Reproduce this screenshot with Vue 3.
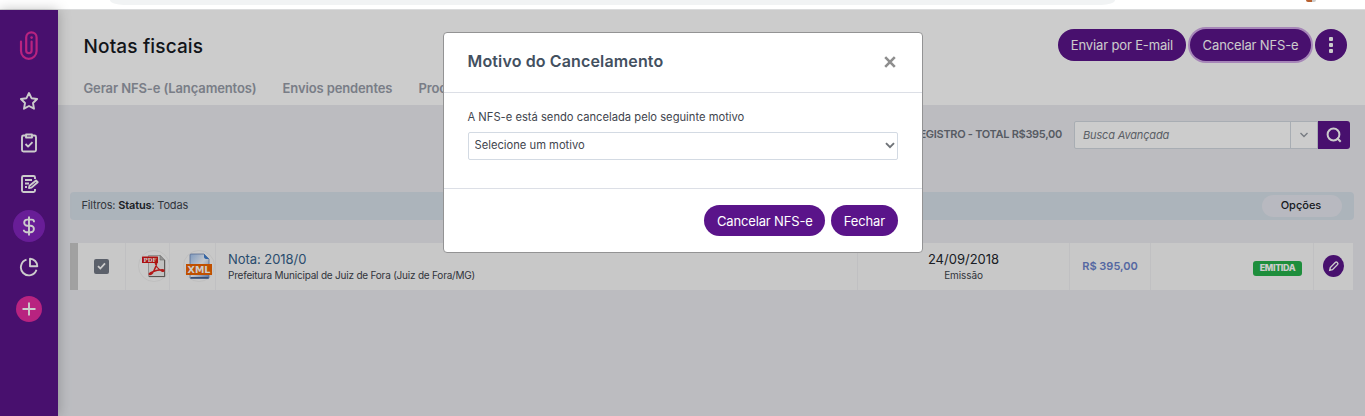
<script setup>
import { ref } from "vue";

const tabs = ["Gerar NFS-e (Lançamentos)", "Envios pendentes", "Processados"];
const motivo = ref("");
const busca = ref("");
const modalOpen = ref(true);
</script>

<template>
  <div class="window">
    <div class="browser-bar">
      <div class="address"></div>
      <div class="avatar"></div>
    </div>

    <div class="app">
      <nav class="sidebar">
        <svg class="logo" width="20" height="32" viewBox="0 0 20 32">
          <path d="M2 11.500V21a7.800 7.800 0 0 0 15.600 0V7.500a5.200 5.200 0 0 0-10.400 0V20.500a2.700 2.700 0 0 0 5.400 0V11.500" />
          <circle cx="12.600" cy="7.600" r="1.300" />
        </svg>
        <a class="item star">
          <svg width="20" height="20" viewBox="0 0 20 20"><path d="M10 2l2.500 5.200 5.600.8-4.100 4 1 5.700-5-2.700-5 2.700 1-5.700-4.100-4 5.600-.8z" /></svg>
        </a>
        <a class="item clip">
          <svg width="20" height="20" viewBox="0 0 20 20"><path d="M6 2.500H4.500a1.500 1.500 0 0 0-1.500 1.500v13a1.500 1.500 0 0 0 1.500 1.500h11a1.500 1.500 0 0 0 1.500-1.500V4a1.500 1.500 0 0 0-1.500-1.500H14M7 1.500h6v3H7zM6.500 11l2.600 2.600 4.400-4.400" /></svg>
        </a>
        <a class="item note">
          <svg width="20" height="20" viewBox="0 0 20 20"><path d="M16 5V3.500A1.500 1.500 0 0 0 14.500 2h-10A1.500 1.500 0 0 0 3 3.500v13A1.500 1.500 0 0 0 4.500 18h10a1.500 1.500 0 0 0 1.500-1.500V15M6 6h7M6 9.500h4M6 13h2M10 14l.5-2.300 6.500-5.200 1.700 1.700-6.200 5.400z" /></svg>
        </a>
        <a class="item money">
          <svg width="20" height="20" viewBox="0 0 20 20"><path d="M10 .5v19M15 6.200V5.800a2.200 2.200 0 0 0-2.200-2.200H8.300a3.100 3.100 0 0 0 0 6.200h3.400a3.200 3.200 0 0 1 0 6.400H7.200a2.400 2.400 0 0 1-2.400-2.500" /></svg>
        </a>
        <a class="item chart">
          <svg width="20" height="20" viewBox="0 0 20 20"><path d="M7.500 2.700A8 8 0 1 0 17.500 12.800M11 1.800v7.400h7.300a7.400 7.400 0 0 0-7.300-7.400z" /></svg>
        </a>
        <a class="item plus">
          <svg width="14" height="14" viewBox="0 0 14 14"><path d="M7 .5v13M.5 7h13" /></svg>
        </a>
      </nav>

      <main class="main">
        <header class="header">
          <div class="title-row">
            <h1>Notas fiscais</h1>
            <div class="actions">
              <button class="btn">Enviar por E-mail</button>
              <button class="btn focus" @click="modalOpen = true">Cancelar NFS-e</button>
              <button class="btn dots"><i></i><i></i><i></i></button>
            </div>
          </div>
          <div class="tabs">
            <a v-for="tab in tabs" :key="tab">{{ tab }}</a>
          </div>
        </header>

        <section class="search-row">
          <span class="total">1 REGISTRO - TOTAL R$395,00</span>
          <div class="search">
            <input v-model="busca" placeholder="Busca Avançada" />
            <button class="caret">
              <svg width="10" height="6" viewBox="0 0 10 6"><path d="M1.500 1L5 4.500 8.500 1" /></svg>
            </button>
            <button class="go">
              <svg width="16" height="16" viewBox="0 0 16 16"><circle cx="7.500" cy="7.500" r="5.900" /><path d="M11 11l3.700 3.700" /></svg>
            </button>
          </div>
        </section>

        <section class="filters">
          <span class="filter-text">Filtros: <b>Status</b>: Todas</span>
          <button class="options">Opções</button>
        </section>

        <section class="row">
          <div class="cell check">
            <span class="box">
              <svg width="9" height="8" viewBox="0 0 9 8"><path d="M1 4.200l2.300 2.300L8 1.300" /></svg>
            </span>
          </div>
          <div class="cell file pdf">
            <span class="round">
              <svg width="24" height="24" viewBox="0 0 24 24">
                <path class="sheet" d="M6.500 1.500h12l4 4.500v16.500h-16z" />
                <path class="shade" d="M7 22.600h15.700V6" />
                <path class="fold" d="M18 1.500V6h4.500z" />
                <path class="acro" d="M7.500 20.500c-1.500-1 5-4.500 13-4.700 2.500 0 1.500 2.300-.5 1.300-4-2-7-6-6.800-9.500.1-1.700 1.800-1 1.500 1.200-.6 4.300-4.200 12.500-7.200 11.700z" />
                <rect class="tag" x="0" y="2.500" width="16" height="6.500" rx=".5" />
                <text x="8" y="7.800" text-anchor="middle">PDF</text>
              </svg>
            </span>
          </div>
          <div class="cell file xml">
            <span class="round">
              <svg width="28" height="28" viewBox="0 0 28 28">
                <defs>
                  <linearGradient id="page" x1="0" y1="0" x2="1" y2="1">
                    <stop offset="0" stop-color="#9fc2f0" />
                    <stop offset=".5" stop-color="#f4f8ff" />
                    <stop offset="1" stop-color="#6d8fc9" />
                  </linearGradient>
                </defs>
                <path fill="url(#page)" stroke="#6d87b5" stroke-width=".8" d="M6 2h13l5 5v18.500a1 1 0 0 1-1 1H6a1 1 0 0 1-1-1V3a1 1 0 0 1 1-1z" />
                <path fill="#3f7fd0" d="M19 2l5 5c-2 0-5 .3-5-2z" />
                <path fill="#47628f" d="M5.500 25h18v1.500h-18z" />
                <rect x="1" y="12" width="26" height="11" fill="#f06400" />
                <text x="14" y="21" text-anchor="middle">XML</text>
              </svg>
            </span>
          </div>
          <div class="cell note-info">
            <a>Nota: 2018/0</a>
            <small>Prefeitura Municipal de Juiz de Fora (Juiz de Fora/MG)</small>
          </div>
          <div class="cell date">
            <span>24/09/2018</span>
            <small>Emissão</small>
          </div>
          <div class="cell price">R$ 395,00</div>
          <div class="cell status"><span class="badge">EMITIDA</span></div>
          <div class="cell edit">
            <button>
              <svg width="12" height="12" viewBox="0 0 12 12"><path d="M1.700 10.300l.6-2.800L7.500 2.200c1-.9 3.100.9 2.200 2.200L4.500 9.700z" /></svg>
            </button>
          </div>
        </section>
      </main>

      <div v-if="modalOpen" class="backdrop">
        <div class="modal">
          <div class="modal-header">
            <h2>Motivo do Cancelamento</h2>
            <button class="close" @click="modalOpen = false">
              <svg width="12" height="12" viewBox="0 0 12 12"><path d="M1.200 1.200l9.600 9.600M10.800 1.200l-9.600 9.600" /></svg>
            </button>
          </div>
          <div class="modal-body">
            <label for="motivo">A NFS-e está sendo cancelada pelo seguinte motivo</label>
            <div class="select">
              <select id="motivo" v-model="motivo">
                <option value="">Selecione um motivo</option>
              </select>
              <svg width="10" height="7" viewBox="0 0 10 7"><path d="M1 1.200l4 4 4-4" /></svg>
            </div>
          </div>
          <div class="modal-footer">
            <button class="btn">Cancelar NFS-e</button>
            <button class="btn" @click="modalOpen = false">Fechar</button>
          </div>
        </div>
      </div>
    </div>
  </div>
</template>

<style>
body {
  margin: 0;
  overflow: hidden;
}
</style>

<style scoped>
* {
  box-sizing: border-box;
  font-family: Inter, "Open Sans", sans-serif;
}

button {
  border: none;
  padding: 0;
  cursor: pointer;
}

svg {
  display: block;
  fill: none;
}

.window {
  display: flex;
  flex-direction: column;
  height: 416px;
  overflow: hidden;
}

.browser-bar {
  display: flex;
  justify-content: space-between;
  height: 10px;
  flex: none;
  padding: 0 48px 0 110px;
  background: #fff;
  border-bottom: 1px solid #dadbdc;
}
.address {
  width: 1005px;
  height: 5px;
  background: #f1f3f4;
  border-radius: 0 0 14px 14px / 0 0 5px 5px;
}
.avatar {
  width: 10px;
  height: 2px;
  margin-right: 1px;
  border-radius: 0 0 5px 5px;
  background: linear-gradient(90deg, #b8602f 60%, #ccc 60%);
}

.app {
  position: relative;
  display: flex;
  flex: 1;
  background: #ebecf1;
}

/* sidebar */
.sidebar {
  width: 58px;
  flex: none;
  display: flex;
  flex-direction: column;
  align-items: center;
  padding-top: 20px;
  background: #5a148a;
  box-shadow: 0 0 12px rgba(0, 0, 0, .25);
  z-index: 1;
}
.logo {
  stroke: #e62ca0;
  stroke-width: 2.2;
  stroke-linecap: round;
}
.logo circle {
  fill: #e62ca0;
  stroke: none;
}
.item {
  display: flex;
  align-items: center;
  justify-content: center;
  width: 32px;
  height: 32px;
  border-radius: 50%;
  stroke: #fff;
  stroke-width: 1.9;
  stroke-linejoin: round;
}
.star { margin-top: 23px; }
.clip { margin-top: 10px; }
.note { margin-top: 9px; }
.money {
  margin-top: 10px;
  background: #8325bd;
}
.chart { margin-top: 9px; }
.plus {
  width: 26px;
  height: 26px;
  margin-top: 13px;
  background: #e62ca0;
}

/* header */
.main {
  flex: 1;
  min-width: 0;
}
.header {
  height: 95px;
  padding: 18px 18px 0 25.5px;
  background: #fff;
}
.title-row {
  display: flex;
  justify-content: space-between;
  height: 34px;
}
h1 {
  margin: 7px 0 0;
  font-size: 19px;
  line-height: 24px;
  font-weight: 500;
  letter-spacing: .15px;
  color: #16191f;
}
.actions {
  display: flex;
  gap: 4px;
}
.btn {
  height: 32px;
  padding: 0 12.5px;
  border-radius: 16px;
  background: #5a148a;
  color: #fff;
  font-size: 13px;
  letter-spacing: -.14px;
  white-space: nowrap;
}
.actions .btn { margin-top: 1px; }
.actions .btn:first-child { padding: 0 13px; }
.focus { box-shadow: 0 0 0 2px #d0a8e6; }
.actions .dots {
  display: flex;
  flex-direction: column;
  align-items: center;
  justify-content: center;
  gap: 2px;
  width: 32px;
  padding: 0;
}
.dots i {
  width: 4px;
  height: 4px;
  border-radius: 1px;
  background: #fff;
}
.tabs {
  display: flex;
  gap: 26px;
  margin-top: 17px;
}
.tabs a {
  font-size: 13px;
  line-height: 18px;
  font-weight: 600;
  letter-spacing: -.12px;
  color: #989da9;
  white-space: nowrap;
}

/* search */
.search-row {
  display: flex;
  justify-content: flex-end;
  gap: 12px;
  height: 87px;
  padding: 16px 15px 0 0;
}
.total {
  font-size: 11px;
  line-height: 27px;
  font-weight: 600;
  letter-spacing: -.3px;
  color: #6d727c;
}
.search {
  display: flex;
  width: 276px;
  height: 28px;
}
.search input {
  flex: 1;
  min-width: 0;
  padding: 0 8px;
  border: 1px solid #d3d9e0;
  border-radius: 2px 0 0 2px;
  background: #fff;
  font-size: 11px;
  letter-spacing: -.15px;
  font-style: italic;
  outline: none;
}
.search input::placeholder { color: #727780; }
.caret {
  width: 28px;
  display: flex;
  align-items: center;
  justify-content: center;
  margin-left: -1px;
  border: 1px solid #d3d9e0;
  background: #fff;
  stroke: #969ba3;
  stroke-width: 1.4;
}
.go {
  width: 32px;
  display: flex;
  align-items: center;
  justify-content: center;
  border-radius: 0 3px 3px 0;
  background: #5a148a;
  stroke: #fff;
  stroke-width: 2;
}

.filters {
  display: flex;
  align-items: center;
  justify-content: space-between;
  height: 28px;
  margin: 0 11px 0 12px;
  padding: 0 12px 0 11.5px;
  border-radius: 4px;
  background: #d8e1ea;
}
.filter-text {
  margin-top: -2px;
  font-size: 11px;
  letter-spacing: -.16px;
  color: #3f454e;
}
.filter-text b {
  font-weight: 600;
  color: #23272d;
}
.options {
  width: 80px;
  height: 22px;
  padding: 0 2px 2px 0;
  border-radius: 11px;
  background: #e6e8f0;
  color: #20242a;
  font-size: 11px;
  font-weight: 500;
}

/* list row */
.row {
  display: grid;
  grid-template-columns: 48px 44px 46px 642px 212px 81px 163px 39px;
  height: 47px;
  margin: 23px 12px 0 12px;
  border-left: 8px solid #cacaca;
  background: #fafafa;
}
.cell {
  display: flex;
  align-items: center;
  justify-content: center;
  border-right: 1px solid #f0f0f3;
}
.box {
  display: flex;
  align-items: center;
  justify-content: center;
  width: 15px;
  height: 15px;
  margin-top: -1px;
  border-radius: 2px;
  background: #727885;
  stroke: #fff;
  stroke-width: 1.8;
}
.round {
  display: flex;
  align-items: center;
  justify-content: center;
  width: 32px;
  height: 32px;
  flex: none;
  border: 1px solid #efefef;
  border-radius: 50%;
  background: #fcfcfc;
}
.pdf { padding-left: 12px; }
.pdf .round {
  margin-top: -1px;
  padding-left: 1px;
}
.xml { padding-left: 12px; }
.xml .round { margin-top: -1px; }
.sheet { fill: #f2f2f0; stroke: #aaa; stroke-width: .8; }
.shade { stroke: #66615c; stroke-width: 1; }
.fold { fill: #bbb; stroke: #888; stroke-width: .6; }
.acro { stroke: #e02020; stroke-width: 1.5; }
.tag { fill: #d81616; }
.file text {
  fill: #fff;
  font-weight: 700;
}
.pdf text {
  font-family: "DejaVu Serif", serif;
  font-size: 5.5px;
}
.xml text {
  font-family: "DejaVu Sans", sans-serif;
  font-size: 9.5px;
}
.note-info {
  flex-direction: column;
  align-items: flex-start;
  padding-left: 12px;
}
.note-info a {
  font-size: 13px;
  line-height: 17px;
  letter-spacing: -.05px;
  color: #34608a;
}
small {
  font-size: 10px;
  line-height: 14px;
  letter-spacing: -.21px;
  color: #3d434c;
}
.date {
  flex-direction: column;
}
.date span {
  font-size: 13px;
  line-height: 17px;
  color: #23272d;
}
.date small { letter-spacing: -.1px; }
.price {
  padding-bottom: 2px;
  font-size: 11px;
  font-weight: 600;
  color: #6b82cb;
}
.status {
  justify-content: flex-end;
  padding: 3px 11px 0 0;
}
.badge {
  width: 49px;
  height: 15px;
  border-radius: 3px;
  background: #26b24b;
  color: #fff;
  font-size: 9px;
  line-height: 14px;
  font-weight: 800;
  letter-spacing: -.4px;
  text-align: center;
}
.edit { border-right: none; }
.edit button {
  display: flex;
  align-items: center;
  justify-content: center;
  width: 21px;
  height: 22px;
  margin-top: -1px;
  border-radius: 50%;
  background: #5a148a;
  stroke: #fff;
  stroke-width: 1.4;
}

/* modal */
.backdrop {
  position: absolute;
  inset: 0;
  z-index: 2;
  display: flex;
  justify-content: center;
  align-items: flex-start;
  padding-top: 22px;
  background: rgba(0, 0, 0, .2);
}
.modal {
  width: 480px;
  height: 221px;
  display: flex;
  flex-direction: column;
  border: 1px solid #939394;
  border-radius: 4px;
  background: #fff;
}
.modal-header {
  display: flex;
  align-items: center;
  justify-content: space-between;
  height: 60px;
  padding: 0 26px 0 24px;
  border-bottom: 1px solid #dcdfe6;
}
h2 {
  margin: 0 0 3px;
  font-size: 16px;
  font-weight: 600;
  letter-spacing: .14px;
  color: #43505f;
}
.close {
  margin-bottom: 1px;
  background: none;
  stroke: #8e8e8e;
  stroke-width: 2.6;
}
.modal-body {
  height: 95px;
  padding: 16px 24px 0;
}
label {
  display: block;
  font-size: 11.2px;
  line-height: 17px;
  color: #3f454e;
}
.select {
  display: flex;
  align-items: center;
  height: 28px;
  margin-top: 6px;
  padding: 0 2px 2px 6px;
  border: 1px solid #d3dae3;
  border-radius: 2px;
  stroke: #6f7378;
  stroke-width: 1.9;
}
select {
  flex: 1;
  appearance: none;
  padding: 0;
  border: none;
  outline: none;
  background: none;
  color: #3f454e;
  font-size: 11.2px;
}
.modal-footer {
  display: flex;
  justify-content: flex-end;
  gap: 6px;
  padding: 16px 24px 0;
  border-top: 1px solid #dcdfe6;
}
.modal-footer .btn { height: 31px; }
</style>
